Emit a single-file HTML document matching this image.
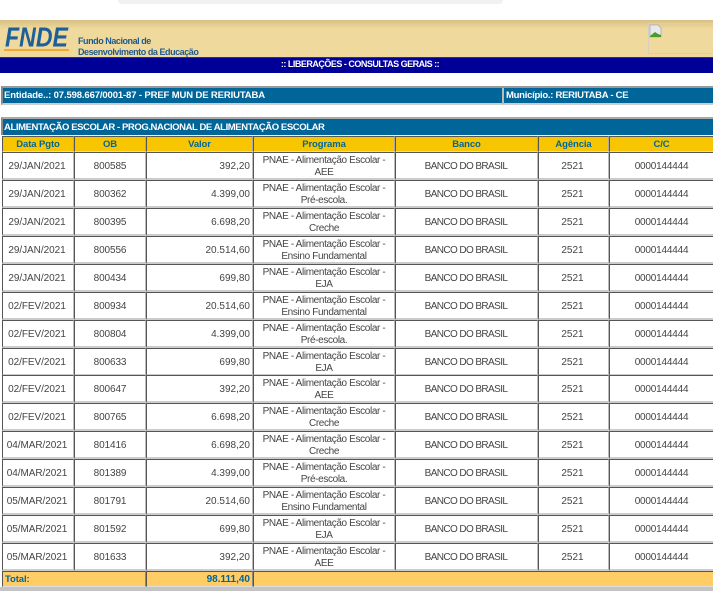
<!DOCTYPE html>
<html><head><meta charset="utf-8"><style>
html,body{margin:0;padding:0;background:#fff}
body{width:713px;height:591px;position:relative;overflow:hidden;font-family:"Liberation Sans",sans-serif;font-size:10px;color:#444}
.a{position:absolute}
.r{position:absolute;left:0;width:713px;height:28px}
.r div,.h div{position:absolute;top:0;box-sizing:border-box;display:flex;align-items:center;justify-content:center;text-align:center}
.r div{height:28px;background:#fff;border-top:1px solid #555;border-left:1px solid #555;border-right:1px solid #bbb;border-bottom:2px solid #ccc;line-height:11.5px;padding-top:2px}
.c1{left:2px;width:72px}.c2{left:74px;width:72px}.c3{left:146px;width:107px}.c4{left:253px;width:142px}.c5{left:395px;width:143px}.c6{left:538px;width:71px}.c7{left:609px;width:110px}
.r .c1{padding-right:2px;letter-spacing:-.05px}
.r .c2{letter-spacing:-.1px}
.r .c3{justify-content:flex-end;padding-right:2px}
.r .c4{letter-spacing:-.36px}
.r .c5{letter-spacing:-.6px;padding-right:1px}
.r .c6{padding-right:2px}
.r .c7{padding-right:5px;letter-spacing:-.2px}
.h{position:absolute;left:0;top:136px;width:713px;height:16px}
.h div{height:16px;background:#f8c600;border:1px solid #555;border-right-color:#aaa;border-bottom:1px solid #ddc;color:#069;font-weight:bold;font-size:9.5px;padding-top:1px;letter-spacing:-.1px}
.h .c7{padding-right:5px}
.bar{color:#fff;font-weight:bold;white-space:nowrap}
</style></head><body>
<div class="a" style="left:118px;top:0;width:385px;height:4px;background:#f0f1f3;border-radius:0 0 20px 20px"></div>
<div class="a" style="left:0;top:20px;width:713px;height:37px;background:linear-gradient(#d8bf85,#efd99c 9px)"></div>
<svg class="a" style="left:0;top:20px" width="80" height="37"><text x="5" y="26.5" font-family="Liberation Sans" font-weight="bold" font-style="italic" font-size="28" fill="#1c5f9b" textLength="63" lengthAdjust="spacingAndGlyphs">FNDE</text><rect x="4" y="29" width="65" height="2" fill="#f6a72c"/></svg>
<div class="a" style="left:78px;top:36px;font-size:9px;line-height:11px;font-weight:bold;color:#1f5a8c;white-space:nowrap;letter-spacing:-.45px">Fundo Nacional de<br>Desenvolvimento da Educação</div>
<div class="a" style="left:648px;top:23px;width:70px;height:31px;border:1px solid #d5cfc0;box-sizing:border-box"></div>
<svg class="a" style="left:649px;top:24px" width="14" height="14"><path d="M1 1H9L12 4V13H1Z" fill="#e6e9ee" stroke="#aab" stroke-width=".8"/><path d="M1 12L6 8L9 10L12 11V13H1Z" fill="#4c9a2a"/></svg>
<div class="a" style="left:0;top:57px;width:713px;height:15px;background:#009;border-top:1px solid #336"></div>
<div class="a bar" style="left:0;top:58px;width:720px;height:14px;line-height:13px;text-align:center;font-size:9px;letter-spacing:-.5px">:: LIBERAÇÕES - CONSULTAS GERAIS ::</div>

<div class="a" style="left:1px;top:86px;width:712px;height:19px;background:#069;border-top:2px solid #999;border-bottom:2px solid #ccc;border-left:2px solid #888;box-sizing:border-box"></div>
<div class="a" style="left:502px;top:88px;width:2px;height:16px;background:#bbb"></div>
<div class="a bar" style="left:4px;top:89px;line-height:14px;font-size:9.5px;letter-spacing:-.13px">Entidade..: 07.598.667/0001-87 - PREF MUN DE RERIUTABA</div>
<div class="a bar" style="left:506px;top:89px;line-height:14px;font-size:9.5px;letter-spacing:-.27px">Município.: RERIUTABA - CE</div>

<div class="a" style="left:1px;top:117px;width:712px;height:18px;background:#069;border-top:2px solid #aaa;border-left:2px solid #888;box-sizing:border-box"></div>
<div class="a bar" style="left:4px;top:121px;line-height:14px;font-size:9.5px;letter-spacing:-.41px">ALIMENTAÇÃO ESCOLAR - PROG.NACIONAL DE ALIMENTAÇÃO ESCOLAR</div>

<div class="h"><div class="c1">Data Pgto</div><div class="c2">OB</div><div class="c3">Valor</div><div class="c4">Programa</div><div class="c5">Banco</div><div class="c6">Agência</div><div class="c7">C/C</div></div>

<div class="r" style="top:152px"><div class="c1">29/JAN/2021</div><div class="c2">800585</div><div class="c3">392,20</div><div class="c4">PNAE - Alimentação Escolar -<br>AEE</div><div class="c5">BANCO DO BRASIL</div><div class="c6">2521</div><div class="c7">0000144444</div></div>
<div class="r" style="top:180px"><div class="c1">29/JAN/2021</div><div class="c2">800362</div><div class="c3">4.399,00</div><div class="c4">PNAE - Alimentação Escolar -<br>Pré-escola.</div><div class="c5">BANCO DO BRASIL</div><div class="c6">2521</div><div class="c7">0000144444</div></div>
<div class="r" style="top:208px"><div class="c1">29/JAN/2021</div><div class="c2">800395</div><div class="c3">6.698,20</div><div class="c4">PNAE - Alimentação Escolar -<br>Creche</div><div class="c5">BANCO DO BRASIL</div><div class="c6">2521</div><div class="c7">0000144444</div></div>
<div class="r" style="top:236px"><div class="c1">29/JAN/2021</div><div class="c2">800556</div><div class="c3">20.514,60</div><div class="c4">PNAE - Alimentação Escolar -<br>Ensino Fundamental</div><div class="c5">BANCO DO BRASIL</div><div class="c6">2521</div><div class="c7">0000144444</div></div>
<div class="r" style="top:264px"><div class="c1">29/JAN/2021</div><div class="c2">800434</div><div class="c3">699,80</div><div class="c4">PNAE - Alimentação Escolar -<br>EJA</div><div class="c5">BANCO DO BRASIL</div><div class="c6">2521</div><div class="c7">0000144444</div></div>
<div class="r" style="top:292px"><div class="c1">02/FEV/2021</div><div class="c2">800934</div><div class="c3">20.514,60</div><div class="c4">PNAE - Alimentação Escolar -<br>Ensino Fundamental</div><div class="c5">BANCO DO BRASIL</div><div class="c6">2521</div><div class="c7">0000144444</div></div>
<div class="r" style="top:320px"><div class="c1">02/FEV/2021</div><div class="c2">800804</div><div class="c3">4.399,00</div><div class="c4">PNAE - Alimentação Escolar -<br>Pré-escola.</div><div class="c5">BANCO DO BRASIL</div><div class="c6">2521</div><div class="c7">0000144444</div></div>
<div class="r" style="top:348px"><div class="c1">02/FEV/2021</div><div class="c2">800633</div><div class="c3">699,80</div><div class="c4">PNAE - Alimentação Escolar -<br>EJA</div><div class="c5">BANCO DO BRASIL</div><div class="c6">2521</div><div class="c7">0000144444</div></div>
<div class="r" style="top:375px"><div class="c1">02/FEV/2021</div><div class="c2">800647</div><div class="c3">392,20</div><div class="c4">PNAE - Alimentação Escolar -<br>AEE</div><div class="c5">BANCO DO BRASIL</div><div class="c6">2521</div><div class="c7">0000144444</div></div>
<div class="r" style="top:403px"><div class="c1">02/FEV/2021</div><div class="c2">800765</div><div class="c3">6.698,20</div><div class="c4">PNAE - Alimentação Escolar -<br>Creche</div><div class="c5">BANCO DO BRASIL</div><div class="c6">2521</div><div class="c7">0000144444</div></div>
<div class="r" style="top:431px"><div class="c1">04/MAR/2021</div><div class="c2">801416</div><div class="c3">6.698,20</div><div class="c4">PNAE - Alimentação Escolar -<br>Creche</div><div class="c5">BANCO DO BRASIL</div><div class="c6">2521</div><div class="c7">0000144444</div></div>
<div class="r" style="top:459px"><div class="c1">04/MAR/2021</div><div class="c2">801389</div><div class="c3">4.399,00</div><div class="c4">PNAE - Alimentação Escolar -<br>Pré-escola.</div><div class="c5">BANCO DO BRASIL</div><div class="c6">2521</div><div class="c7">0000144444</div></div>
<div class="r" style="top:487px"><div class="c1">05/MAR/2021</div><div class="c2">801791</div><div class="c3">20.514,60</div><div class="c4">PNAE - Alimentação Escolar -<br>Ensino Fundamental</div><div class="c5">BANCO DO BRASIL</div><div class="c6">2521</div><div class="c7">0000144444</div></div>
<div class="r" style="top:515px"><div class="c1">05/MAR/2021</div><div class="c2">801592</div><div class="c3">699,80</div><div class="c4">PNAE - Alimentação Escolar -<br>EJA</div><div class="c5">BANCO DO BRASIL</div><div class="c6">2521</div><div class="c7">0000144444</div></div>
<div class="r" style="top:543px"><div class="c1">05/MAR/2021</div><div class="c2">801633</div><div class="c3">392,20</div><div class="c4">PNAE - Alimentação Escolar -<br>AEE</div><div class="c5">BANCO DO BRASIL</div><div class="c6">2521</div><div class="c7">0000144444</div></div>

<div class="a" style="left:0;top:587px;width:713px;height:4px;background:#c4c4c4"></div>
<div class="a" style="left:2px;top:571px;width:144px;height:16px;box-sizing:border-box;background:#fc6;border:1px solid #555;border-right-color:#888;border-bottom:1px solid #ddd;color:#069;font-weight:bold;font-size:9.5px;line-height:15px;padding-left:2px;letter-spacing:-.1px">Total:</div>
<div class="a" style="left:146px;top:571px;width:107px;height:16px;box-sizing:border-box;background:#fc6;border:1px solid #555;border-right-color:#888;border-bottom:1px solid #ddd;color:#069;font-weight:bold;line-height:15px;text-align:right;padding-right:2px">98.111,40</div>
<div class="a" style="left:253px;top:571px;width:470px;height:16px;box-sizing:border-box;background:#fc6;border:1px solid #555;border-bottom:1px solid #ddd"></div>
</body></html>
